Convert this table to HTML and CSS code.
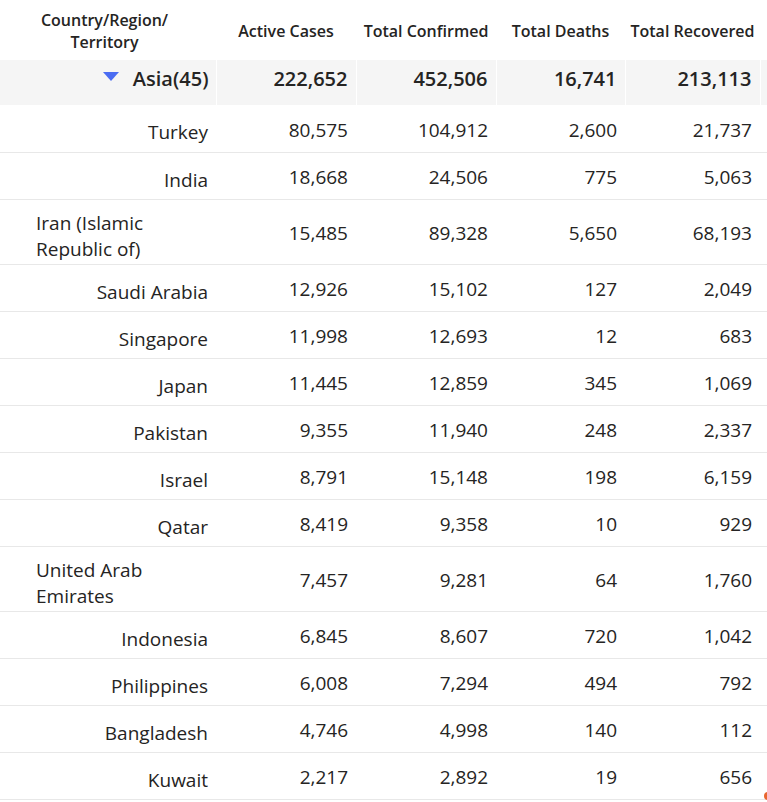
FILE: index.html
```html
<!DOCTYPE html>
<html>
<head>
<meta charset="utf-8">
<link rel="stylesheet" href="styles.css">
</head>
<body>
<div class="matrix">
<table class="grid">
  <colgroup>
    <col class="c-name"><col class="c-num"><col class="c-num"><col class="c-deaths"><col class="c-rec"><col class="c-rest">
  </colgroup>
  <thead>
    <tr class="head">
      <th class="h-name">Country/Region/<br>Territory</th>
      <th>Active Cases</th>
      <th>Total Confirmed</th>
      <th>Total Deaths</th>
      <th>Total Recovered</th>
      <th></th>
    </tr>
  </thead>
  <tbody>
    <tr class="group">
      <td class="g-name"><span class="tri"></span>Asia(45)</td>
      <td>222,652</td>
      <td>452,506</td>
      <td>16,741</td>
      <td>213,113</td>
      <td class="rest"></td>
    </tr>
    <tr class="row"><td class="name"><span>Turkey</span></td><td>80,575</td><td>104,912</td><td>2,600</td><td>21,737</td><td></td></tr>
    <tr class="row"><td class="name"><span>India</span></td><td>18,668</td><td>24,506</td><td>775</td><td>5,063</td><td></td></tr>
    <tr class="row tall"><td class="name"><span>Iran (Islamic Republic of)</span></td><td>15,485</td><td>89,328</td><td>5,650</td><td>68,193</td><td></td></tr>
    <tr class="row"><td class="name"><span>Saudi Arabia</span></td><td>12,926</td><td>15,102</td><td>127</td><td>2,049</td><td></td></tr>
    <tr class="row"><td class="name"><span>Singapore</span></td><td>11,998</td><td>12,693</td><td>12</td><td>683</td><td></td></tr>
    <tr class="row"><td class="name"><span>Japan</span></td><td>11,445</td><td>12,859</td><td>345</td><td>1,069</td><td></td></tr>
    <tr class="row"><td class="name"><span>Pakistan</span></td><td>9,355</td><td>11,940</td><td>248</td><td>2,337</td><td></td></tr>
    <tr class="row"><td class="name"><span>Israel</span></td><td>8,791</td><td>15,148</td><td>198</td><td>6,159</td><td></td></tr>
    <tr class="row"><td class="name"><span>Qatar</span></td><td>8,419</td><td>9,358</td><td>10</td><td>929</td><td></td></tr>
    <tr class="row tall"><td class="name"><span>United Arab Emirates</span></td><td>7,457</td><td>9,281</td><td>64</td><td>1,760</td><td></td></tr>
    <tr class="row"><td class="name"><span>Indonesia</span></td><td>6,845</td><td>8,607</td><td>720</td><td>1,042</td><td></td></tr>
    <tr class="row"><td class="name"><span>Philippines</span></td><td>6,008</td><td>7,294</td><td>494</td><td>792</td><td></td></tr>
    <tr class="row"><td class="name"><span>Bangladesh</span></td><td>4,746</td><td>4,998</td><td>140</td><td>112</td><td></td></tr>
    <tr class="row"><td class="name"><span>Kuwait</span></td><td>2,217</td><td>2,892</td><td>19</td><td>656</td><td></td></tr>
  </tbody>
</table>
<span class="dot"></span>
</div>
</body>
</html>
```

FILE: styles.css
```css
html, body {
  margin: 0;
  padding: 0;
  background: #ffffff;
}
body {
  font-family: "Open Sans", "Noto Sans", sans-serif;
  color: #252423;
  overflow: hidden;
}
.matrix {
  position: relative;
  width: 767px;
  height: 802px;
  overflow: hidden;
}
.grid {
  border-collapse: collapse;
  table-layout: fixed;
  width: 767px;
}
.grid td, .grid th {
  box-sizing: border-box;
}
.c-name { width: 216px; }
.c-num { width: 140px; }
.c-deaths { width: 129px; }
.c-rec { width: 135px; }
.c-rest { width: 7px; }

.head th {
  height: 60px;
  padding: 2px 0 0 0;
  font-size: 16px;
  font-weight: 600;
  line-height: 22px;
  text-align: center;
  vertical-align: middle;
  color: #252423;
}
.head .h-name {
  padding-right: 7px;
}

.group td {
  height: 45px;
  padding: 0 8px 7px 0;
  background: #f5f5f5;
  border-right: 1px solid #ffffff;
  font-size: 20px;
  font-weight: 600;
  text-align: right;
  vertical-align: middle;
  line-height: 26px;
}
.group td.rest {
  border-right: none;
  padding: 0;
}
.group .g-name {
  padding-right: 7px;
}
.tri {
  display: inline-block;
  width: 0;
  height: 0;
  border-left: 8px solid transparent;
  border-right: 8px solid transparent;
  border-top: 9px solid #4a6cf2;
  margin-right: 14px;
  vertical-align: 5px;
}

.row td {
  height: 47px;
  padding: 3px 8px 0 0;
  border-bottom: 1px solid #e8e8e8;
  font-size: 19px;
  line-height: 26px;
  text-align: right;
  vertical-align: middle;
}
.row.tall td {
  height: 65px;
}
.row td.name {
  padding: 8px 8px 0 36px;
}
.name span {
  display: inline-block;
  text-align: left;
}
.dot {
  position: absolute;
  right: -5px;
  bottom: 2px;
  width: 8px;
  height: 8px;
  border-radius: 50%;
  background: #e8652e;
}
```
